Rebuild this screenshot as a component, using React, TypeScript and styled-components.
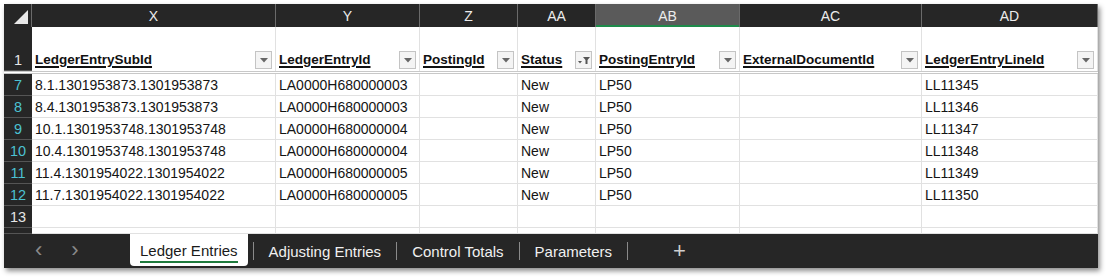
import styled, { createGlobalStyle } from "styled-components";

const columns = ["X", "Y", "Z", "AA", "AB", "AC", "AD"];
const widths = "28px 244px 144px 98px 78px 144px 182px 176px";

const headers = [
  { label: "LedgerEntrySubId", filtered: false },
  { label: "LedgerEntryId", filtered: false },
  { label: "PostingId", filtered: false },
  { label: "Status", filtered: true },
  { label: "PostingEntryId", filtered: false },
  { label: "ExternalDocumentId", filtered: false },
  { label: "LedgerEntryLineId", filtered: false },
];

const rows = [
  { n: 7, cells: ["8.1.1301953873.1301953873", "LA0000H680000003", "", "New", "LP50", "", "LL11345"] },
  { n: 8, cells: ["8.4.1301953873.1301953873", "LA0000H680000003", "", "New", "LP50", "", "LL11346"] },
  { n: 9, cells: ["10.1.1301953748.1301953748", "LA0000H680000004", "", "New", "LP50", "", "LL11347"] },
  { n: 10, cells: ["10.4.1301953748.1301953748", "LA0000H680000004", "", "New", "LP50", "", "LL11348"] },
  { n: 11, cells: ["11.4.1301954022.1301954022", "LA0000H680000005", "", "New", "LP50", "", "LL11349"] },
  { n: 12, cells: ["11.7.1301954022.1301954022", "LA0000H680000005", "", "New", "LP50", "", "LL11350"] },
];

const tabs = ["Ledger Entries", "Adjusting Entries", "Control Totals", "Parameters"];

export default function App() {
  return (
    <>
      <GlobalStyle />
      <Page>
        <Window>
          <ColumnBar>
            <Corner>
              <svg width="14" height="14" viewBox="0 0 14 14">
                <polygon points="14,0 14,14 0,14" fill="#e8e8e8" />
              </svg>
            </Corner>
            {columns.map((c) => (
              <ColumnLetter key={c} $selected={c === "AB"}>
                {c}
              </ColumnLetter>
            ))}
          </ColumnBar>

          <HeaderRow>
            <RowNumber $tone="plain">1</RowNumber>
            {headers.map((h) => (
              <HeaderCell key={h.label}>
                <HeaderText>{h.label}</HeaderText>
                <FilterButton>
                  {h.filtered ? (
                    <svg width="12" height="10" viewBox="0 0 12 10">
                      <polygon points="5,2 12,2 9.5,5 9.5,9 7.5,9 7.5,5" fill="#555" />
                      <polygon points="0,6 4,6 2,8.5" fill="#555" />
                    </svg>
                  ) : (
                    <svg width="8" height="5" viewBox="0 0 8 5">
                      <polygon points="0,0 8,0 4,4.5" fill="#666" />
                    </svg>
                  )}
                </FilterButton>
              </HeaderCell>
            ))}
          </HeaderRow>

          {rows.map((r) => (
            <DataRow key={r.n}>
              <RowNumber $tone="filtered">{r.n}</RowNumber>
              {r.cells.map((v, i) => (
                <Cell key={i}>{v}</Cell>
              ))}
            </DataRow>
          ))}

          <DataRow>
            <RowNumber $tone="plain">13</RowNumber>
            {columns.map((c) => (
              <Cell key={c} />
            ))}
          </DataRow>

          <PartialRow>
            <RowNumber $tone="plain" />
            {columns.map((c) => (
              <Cell key={c} />
            ))}
          </PartialRow>

          <TabBar>
            <NavArrows>
              <NavArrow>‹</NavArrow>
              <NavArrow>›</NavArrow>
            </NavArrows>
            {tabs.map((t, i) => (
              <TabGroup key={t}>
                <Tab $active={i === 0}>
                  <TabLabel $active={i === 0}>{t}</TabLabel>
                </Tab>
                <TabDivider />
              </TabGroup>
            ))}
            <AddSheet>+</AddSheet>
          </TabBar>
        </Window>
      </Page>
    </>
  );
}

const GlobalStyle = createGlobalStyle`
  html, body {
    margin: 0;
    background: #ffffff;
  }
  body {
    font-family: "Liberation Sans", Arial, sans-serif;
  }
`;

const Page = styled.div`
  padding: 4px 0 0 4px;
  width: 1111px;
  height: 277px;
  box-sizing: border-box;
`;

const Window = styled.div`
  width: 1094px;
  background: #ffffff;
  box-shadow: 2px 3px 5px rgba(0, 0, 0, 0.45);
`;

const ColumnBar = styled.div`
  display: grid;
  grid-template-columns: ${widths};
  height: 23px;
  background: #262626;
`;

const Corner = styled.div`
  display: flex;
  align-items: flex-end;
  justify-content: flex-end;
  padding: 0 3px 3px 0;
  border-right: 1px solid #6a6a6a;
`;

const ColumnLetter = styled.div<{ $selected: boolean }>`
  display: flex;
  align-items: center;
  justify-content: center;
  font-size: 14px;
  color: #ececec;
  border-right: 1px solid #6a6a6a;
  background: ${(p) => (p.$selected ? "#5a5a5a" : "transparent")};
  box-shadow: ${(p) => (p.$selected ? "inset 0 -2px 0 #1e8a4a" : "none")};
`;

const HeaderRow = styled.div`
  display: grid;
  grid-template-columns: ${widths};
  height: 44px;
  border-bottom: 3px double #c8c8c8;
`;

const DataRow = styled.div`
  display: grid;
  grid-template-columns: ${widths};
  height: 22px;
`;

const PartialRow = styled(DataRow)`
  height: 6px;
`;

const RowNumber = styled.div<{ $tone: "plain" | "filtered" }>`
  display: flex;
  align-items: flex-end;
  justify-content: center;
  padding-bottom: 2px;
  box-sizing: border-box;
  background: #262626;
  color: ${(p) => (p.$tone === "filtered" ? "#4cc2d2" : "#e6e6e6")};
  font-size: 14.5px;
  border-bottom: 1px solid #555555;
`;

const HeaderCell = styled.div`
  display: flex;
  align-items: flex-end;
  justify-content: space-between;
  padding: 0 3px 2px 3px;
  border-right: 1px solid #e1e1e1;
  min-width: 0;
`;

const HeaderText = styled.span`
  font-weight: 700;
  font-size: 13.5px;
  color: #111111;
  text-decoration: underline;
  text-decoration-thickness: 1.5px;
  text-underline-offset: 2px;
  padding-bottom: 2px;
  white-space: nowrap;
`;

const FilterButton = styled.div`
  display: flex;
  align-items: center;
  justify-content: center;
  width: 15px;
  height: 16px;
  flex: none;
  background: #f4f4f4;
  border: 1px solid #c4c4c4;
`;

const Cell = styled.div`
  display: flex;
  align-items: flex-end;
  padding: 0 3px 2px 3px;
  font-size: 14px;
  color: #141414;
  border-right: 1px solid #e1e1e1;
  border-bottom: 1px solid #e1e1e1;
  white-space: nowrap;
  overflow: hidden;
`;

const TabBar = styled.div`
  display: flex;
  align-items: stretch;
  height: 34px;
  background: #262626;
  padding-left: 18px;
`;

const NavArrows = styled.div`
  display: flex;
  align-items: center;
  gap: 29px;
  width: 108px;
  padding-left: 13px;
  box-sizing: border-box;
`;

const NavArrow = styled.span`
  color: #8a8a8a;
  font-size: 22px;
  line-height: 1;
  margin-top: -3px;
`;

const TabGroup = styled.div`
  display: flex;
  align-items: center;
`;

const Tab = styled.div<{ $active: boolean }>`
  display: flex;
  align-items: center;
  height: ${(p) => (p.$active ? "32px" : "34px")};
  align-self: flex-start;
  padding: 0 10px;
  background: ${(p) => (p.$active ? "#ffffff" : "transparent")};
  border-radius: 0 0 4px 4px;
`;

const TabLabel = styled.span<{ $active: boolean }>`
  font-size: 15px;
  color: ${(p) => (p.$active ? "#1a1a1a" : "#f0f0f0")};
  padding-bottom: ${(p) => (p.$active ? "2px" : "0")};
  border-bottom: ${(p) => (p.$active ? "2px solid #1e7a3c" : "none")};
  margin-top: ${(p) => (p.$active ? "4px" : "0")};
`;

const TabDivider = styled.div`
  width: 1px;
  height: 18px;
  background: #8a8a8a;
  margin: 0 5px;
`;

const AddSheet = styled.div`
  display: flex;
  align-items: center;
  margin-left: 40px;
  color: #cfcfcf;
  font-size: 22px;
  font-weight: 300;
`;
